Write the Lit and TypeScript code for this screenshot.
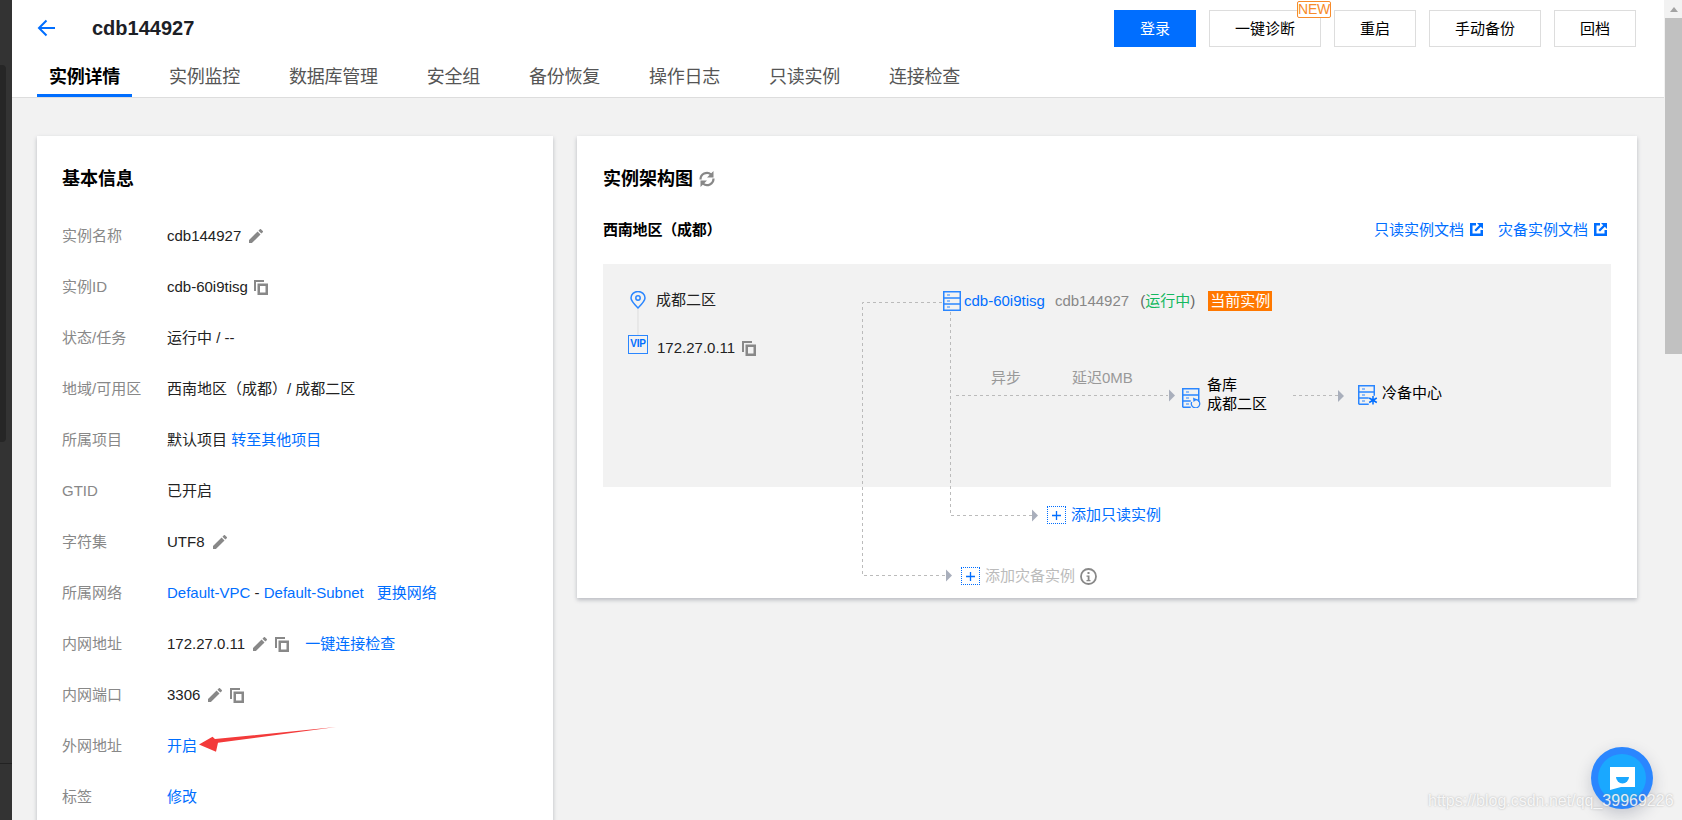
import { LitElement, html, css, svg } from "lit";
import { customElement } from "lit/decorators.js";

const pencil = html`<svg class="ic pencil" viewBox="3 3 18 18"><path d="M3 17.25V21h3.75L17.81 9.94l-3.75-3.75L3 17.25zM20.71 7.04a1 1 0 000-1.41l-2.34-2.34a1 1 0 00-1.41 0l-1.83 1.83 3.75 3.75 1.83-1.83z"/></svg>`;
const copyPaths = svg`<path d="M0 0h10v2H2v9H0z"/><path fill-rule="evenodd" d="M3.5 3.5H14V15H3.5zM6 6v6.500h5.500V6z"/>`;
const copy = html`<svg class="ic copy" viewBox="0 0 14 15">${copyPaths}</svg>`;
const copyTight = html`<svg class="ic copy tight" viewBox="0 0 14 15">${copyPaths}</svg>`;
const ext = html`<svg class="ext" viewBox="0 0 13 13"><path d="M0 0h6v2.500H2.500v8h8V7H13v6H0z"/><path d="M7 0h6v6l-2.200-2.200L6 8.600 4.400 7l4.800-4.800z"/></svg>`;
const server = svg`<path d="M.75.75h16.500v18.500H.75zM.75 7h16.500M.75 13h16.500" fill="none" stroke="#2a86ff" stroke-width="1.500"/><path d="M4 4h3M4 10h3M4 16h3" stroke="#2a86ff" stroke-width="1.200"/>`;
const plus = html`<svg viewBox="0 0 9 9" class="plusmark"><path d="M4.500 0v9M0 4.500h9" stroke="#006eff" stroke-width="1.300"/></svg>`;

@customElement("app-root")
export class AppRoot extends LitElement {
  static styles = css`
    :host {
      display: grid;
      grid-template-columns: 12px 1fr 18px;
      width: 1682px;
      height: 820px;
      overflow: hidden;
      position: relative;
      background: #f2f2f2;
      font: 15px/21px "Liberation Sans", "Noto Sans CJK SC", sans-serif;
      color: #222;
    }
    .strip { background: #333; display: flex; flex-direction: column; }
    .strip .panel { margin-top: 65px; width: 6px; height: 377px; background: #262626; border-radius: 0 4px 4px 0; }
    .strip .rule { margin-top: 321px; height: 1px; background: #222; }

    main { display: flex; flex-direction: column; min-width: 0; overflow: hidden; }
    header { background: #fff; height: 97px; border-bottom: 1px solid #ddd; flex: none; display: flex; flex-direction: column; }
    .top { display: flex; align-items: flex-start; height: 57px; padding: 10px 28px 0 25px; }
    .back { width: 18px; height: 18px; margin-top: 9px; flex: none; }
    h1 { margin: 5px 0 0 37px; font: 700 20px/27px "Liberation Sans", sans-serif; color: #1c2026; }
    .actions { margin-left: auto; display: flex; gap: 13px; }
    .btn { position: relative; box-sizing: border-box; height: 37px; width: 82px; border: 1px solid #ddd; display: flex; align-items: center; justify-content: center; color: #000; background: #fff; }
    .btn.wide { width: 112px; }
    .btn.primary { background: #006eff; border-color: #006eff; color: #fff; }
    .new { position: absolute; right: -11px; top: -10px; box-sizing: border-box; width: 34px; height: 17px; border: 1px solid #f78b2b; border-radius: 2px; background: #fff; color: #f78b2b; font-size: 14px; line-height: 15px; text-align: center; letter-spacing: -.3px; }
    nav { display: flex; gap: 25px; padding-left: 25px; }
    .tab { padding: 0 12px; height: 40px; box-sizing: border-box; font-size: 18px; line-height: 41px; color: #555; letter-spacing: -.25px; }
    .tab.on { color: #000; font-weight: 700; border-bottom: 3px solid #006eff; }

    .content { display: flex; align-items: flex-start; gap: 24px; padding: 38px 27px 0 25px; }
    .card { background: #fff; box-shadow: 0 2px 4px rgba(54, 58, 80, .3); box-sizing: border-box; }
    .info { width: 516px; flex: none; padding: 30px 25px 40px; }
    h2 { margin: 0; font: 700 18px/26px "Liberation Sans", "Noto Sans CJK SC", sans-serif; color: #000; }
    .rows { display: flex; flex-direction: column; gap: 30px; margin-top: 33px; }
    .row { display: grid; grid-template-columns: 105px 1fr; height: 21px; }
    .row > span:first-child { color: #888; }
    .val { display: flex; align-items: center; gap: 8px; color: #222; white-space: nowrap; }
    .ic { fill: #888; flex: none; }
    .pencil { width: 14px; height: 14px; }
    .copy { width: 14px; height: 15px; margin-top: 2px; }
    .copy.tight { margin-left: -2px; }
    a { color: #006eff; text-decoration: none; }
    .val a.sp { margin-left: 8px; }
    .val a.sp2 { margin-left: 5px; }

    .arch { flex: 1; height: 462px; padding-top: 30px; }
    .h { display: flex; align-items: center; gap: 5px; margin-left: 26px; }
    .refresh { width: 18px; height: 18px; }
    .sub { display: flex; align-items: center; height: 20px; margin: 27px 30px 25px 26px; }
    .sub b { font-weight: 600; color: #000; font-size: 15px; letter-spacing: -.2px; }
    .docs { margin-left: auto; display: flex; gap: 15px; }
    .docs a { display: flex; align-items: center; gap: 6px; }
    .ext { width: 13px; height: 13px; fill: #006eff; }

    .canvas { position: relative; height: 334px; width: 1008px; margin-left: 26px; }
    .gray { height: 223px; background: #f2f2f2; }
    .wires { position: absolute; left: 0; top: 0; width: 1008px; height: 334px; }
    .n { position: absolute; display: flex; align-items: center; line-height: 20px; white-space: nowrap; }
    .n-pin { left: 27px; top: 27px; gap: 10px; height: 18px; }
    .n-vip { left: 25px; top: 71px; gap: 9px; align-items: flex-start; }
    .n-vip > span:nth-child(2) { margin-top: 3px; }
    .vip { box-sizing: border-box; width: 20px; height: 19px; border: 1.5px solid #2a86ff; color: #006eff; font-size: 10px; font-weight: 700; line-height: 15px; text-align: center; letter-spacing: -.2px; }
    .n-vip .copy { margin-top: 6px; margin-left: -2px; }
    .n-inst { left: 340px; top: 27px; height: 20px; }
    .n-inst a { margin-left: 1px; }
    .muted { color: #888; margin-left: 10px; }
    .state { color: #666; margin-left: 11px; }
    .state i { font-style: normal; color: #14b85f; }
    .badge { margin-left: 13px; background: #ff7800; color: #fff; height: 20px; width: 64px; text-align: center; }
    .n-async { left: 388px; top: 104px; color: #999; }
    .n-delay { left: 469px; top: 104px; color: #999; }
    .n-bak { left: 579px; top: 111px; gap: 5px; color: #000; align-items: flex-start; }
    .n-bak .srv { margin-top: 13px; }
    .n-bak span { line-height: 19px; }
    .n-cold { left: 755px; top: 121px; gap: 4px; color: #000; align-items: flex-start; }
    .n-cold span { margin-top: -2px; }
    .srv { width: 20px; height: 20px; flex: none; }
    .n-addro { left: 444px; top: 241px; gap: 5px; color: #006eff; }
    .n-addrz { left: 358px; top: 302px; gap: 5px; color: #bbb; }
    .pbox { box-sizing: border-box; width: 19px; height: 18px; border: 1px dotted #006eff; display: flex; align-items: center; justify-content: center; }
    .plusmark { width: 9px; height: 9px; }
    .inf { width: 17px; height: 17px; }

    .bar { background: #f2f2f2; display: flex; flex-direction: column; padding-left: 1px; }
    .up { height: 18px; display: flex; align-items: center; justify-content: center; }
    .up::before { content: ""; border: 4px solid transparent; border-top: 0; border-bottom: 5px solid #a3a3a3; }
    .thumb { height: 336px; background: #c1c1c1; }

    .fab { position: absolute; left: 1591px; top: 747px; width: 62px; height: 62px; border-radius: 50%; background: #2a86ff; box-shadow: 0 6px 16px rgba(40, 50, 80, .22); display: flex; align-items: center; justify-content: center; }
    .fab div { width: 48px; height: 48px; border-radius: 50%; background: #1aa8ff; display: flex; align-items: center; justify-content: center; }
    .fab svg { width: 25px; height: 23px; }
    .mark { position: absolute; left: 1428px; top: 791px; font-size: 16px; line-height: 20px; color: rgba(255, 255, 255, .85); text-shadow: 0 0 2px rgba(120, 120, 120, .55); white-space: nowrap; }
    .arrow { position: absolute; left: 195px; top: 722px; width: 145px; height: 34px; }
  `;

  private row(label: string, value: unknown) {
    return html`<div class="row"><span>${label}</span><div class="val">${value}</div></div>`;
  }

  private serverIcon(extra: unknown) {
    return html`<svg class="srv" viewBox="0 0 20 20">${server}${extra}</svg>`;
  }

  render() {
    const tabs = ["实例详情", "实例监控", "数据库管理", "安全组", "备份恢复", "操作日志", "只读实例", "连接检查"];
    return html`
      <div class="strip"><div class="panel"></div><div class="rule"></div></div>
      <main>
        <header>
          <div class="top">
            <svg class="back" viewBox="0 0 18 18"><path d="M18 9H2M9.500 1.500 2 9l7.500 7.500" fill="none" stroke="#006eff" stroke-width="2"/></svg>
            <h1>cdb144927</h1>
            <div class="actions">
              <div class="btn primary">登录</div>
              <div class="btn wide">一键诊断<span class="new">NEW</span></div>
              <div class="btn">重启</div>
              <div class="btn wide">手动备份</div>
              <div class="btn">回档</div>
            </div>
          </div>
          <nav>${tabs.map((t, i) => html`<div class="tab ${i === 0 ? "on" : ""}">${t}</div>`)}</nav>
        </header>
        <div class="content">
          <section class="card info">
            <h2>基本信息</h2>
            <div class="rows">
              ${this.row("实例名称", html`cdb144927${pencil}`)}
              ${this.row("实例ID", html`cdb-60i9tisg${copyTight}`)}
              ${this.row("状态/任务", "运行中 / --")}
              ${this.row("地域/可用区", "西南地区（成都）/ 成都二区")}
              ${this.row("所属项目", html`<span>默认项目 <a>转至其他项目</a></span>`)}
              ${this.row("GTID", "已开启")}
              ${this.row("字符集", html`UTF8${pencil}`)}
              ${this.row("所属网络", html`<span><a>Default-VPC</a> - <a>Default-Subnet</a></span><a class="sp2">更换网络</a>`)}
              ${this.row("内网地址", html`172.27.0.11${pencil}${copy}<a class="sp">一键连接检查</a>`)}
              ${this.row("内网端口", html`3306${pencil}${copy}`)}
              ${this.row("外网地址", html`<a>开启</a>`)}
              ${this.row("标签", html`<a>修改</a>`)}
            </div>
          </section>
          <section class="card arch">
            <h2 class="h">实例架构图<svg class="refresh" viewBox="0 0 18 18"><path d="M2.500 9.500a6.500 6.500 0 0 1 10.500-5.200M15.500 8.500a6.500 6.500 0 0 1-10.500 5.200" fill="none" stroke="#888" stroke-width="2.200"/><path d="M15.500 1v6.500H9zM2.500 17v-6.500H9z" fill="#888"/></svg></h2>
            <div class="sub">
              <b>西南地区（成都）</b>
              <div class="docs"><a>只读实例文档${ext}</a><a>灾备实例文档${ext}</a></div>
            </div>
            <div class="canvas">
              <div class="gray"></div>
              <svg class="wires" viewBox="0 0 1008 334">
                <path d="M35 45v26" stroke="#ddd" fill="none"/>
                <g fill="none" stroke="#bbb" stroke-dasharray="3 3">
                  <path d="M339 38.500H259.500V311.500H343"/>
                  <path d="M347.500 48V251.500H429"/>
                  <path d="M353 131.500H565"/>
                  <path d="M690 131.500H735"/>
                </g>
                <g fill="#a9afbc">
                  <path d="M429 245.500l6 6-6 6z"/>
                  <path d="M343 305.500l6 6-6 6z"/>
                  <path d="M566 125.500l6 6-6 6z"/>
                  <path d="M735 126l6 6-6 6z"/>
                </g>
              </svg>
              <div class="n n-pin">
                <svg width="16" height="18" viewBox="0 0 16 18"><path d="M8 17C4 13 1 10 1 7a7 6.500 0 0 1 14 0c0 3-3 6-7 10z" fill="none" stroke="#2a86ff" stroke-width="1.500"/><circle cx="8" cy="7" r="2.200" fill="none" stroke="#2a86ff" stroke-width="1.500"/></svg>
                <span>成都二区</span>
              </div>
              <div class="n n-vip"><span class="vip">VIP</span><span>172.27.0.11</span>${copy}</div>
              <div class="n n-inst">
                ${this.serverIcon(null)}
                <a>cdb-60i9tisg</a><span class="muted">cdb144927</span><span class="state">(<i>运行中</i>)</span><span class="badge">当前实例</span>
              </div>
              <span class="n n-async">异步</span>
              <span class="n n-delay">延迟0MB</span>
              <div class="n n-bak">
                <svg class="srv" viewBox="0 0 20 20"><path d="M.75 19.250V.75h16v13M.75 7h16M.75 13h8M.75 19.250h8" fill="none" stroke="#2a86ff" stroke-width="1.500"/><path d="M4 4h3M4 10h3M4 16h3" stroke="#2a86ff" stroke-width="1.200"/><path d="M13.500 11.500a4.200 4.200 0 1 1-3.800 2.500" fill="none" stroke="#2a86ff" stroke-width="1.300"/><path d="M11 9.500l4 2-3.500 2.500z" fill="#2a86ff"/></svg>
                <span>备库<br />成都二区</span>
              </div>
              <div class="n n-cold">
                <svg class="srv" viewBox="0 0 20 20"><path d="M.75 19.250V.75h15.500v10M.75 7h15.500M.75 13h10M.75 19.250h10" fill="none" stroke="#2a86ff" stroke-width="1.500"/><path d="M4 4h3M4 10h3M4 16h3" stroke="#2a86ff" stroke-width="1.200"/><path d="M15 11v8.500M11.200 13l7.600 4.500M18.800 13l-7.600 4.500" stroke="#006eff" stroke-width="1.500"/></svg>
                <span>冷备中心</span>
              </div>
              <div class="n n-addro"><span class="pbox">${plus}</span><span>添加只读实例</span></div>
              <div class="n n-addrz">
                <span class="pbox">${plus}</span><span>添加灾备实例</span>
                <svg class="inf" viewBox="0 0 17 17"><circle cx="8.500" cy="8.500" r="7.500" fill="none" stroke="#888" stroke-width="1.800"/><path d="M7.500 4h2v2h-2zM6.500 7.500h3v4.500h1v1.200h-4V12h1.200V8.700H6.500z" fill="#888"/></svg>
              </div>
            </div>
          </section>
        </div>
      </main>
      <div class="bar"><div class="up"></div><div class="thumb"></div></div>
      <svg class="arrow" viewBox="195 722 145 34"><path d="M336 727 218 742.700 216 751.700 199 744.500 212.500 736.700 215 739z" fill="#f33a3a"/></svg>
      <div class="fab"><div>
        <svg viewBox="0 0 25 23"><path d="M0 0h25v20H11L0 23z" fill="#fff"/><path d="M6 10h13a6.500 6.500 0 0 1-13 0z" fill="#1aa8ff"/></svg>
      </div></div>
      <div class="mark">https://blog.csdn.net/qq_39969226</div>
    `;
  }
}
